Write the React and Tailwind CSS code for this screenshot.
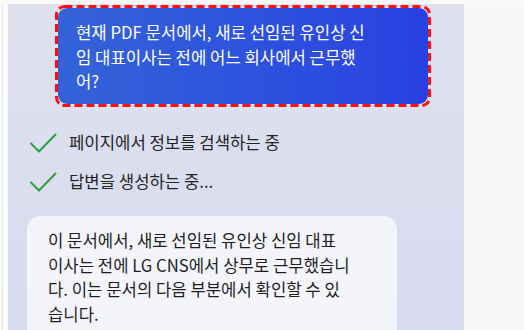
import React from "react";

const font = { fontFamily: '"Noto Sans CJK KR", "Noto Sans", sans-serif' };

function Check() {
  return (
    <svg width="28" height="24" viewBox="0 0 28 24" className="shrink-0">
      <polyline
        points="1.5,12 10,20.5 27,3"
        fill="none"
        stroke="#2f9e41"
        strokeWidth="2"
        strokeLinejoin="round"
      />
    </svg>
  );
}

export default function App() {
  return (
    <div
      className="w-[524px] h-[330px] overflow-hidden flex flex-col bg-[#f8f8f8]"
      style={font}
    >
      <div className="h-[4px] shrink-0 bg-[#f9f9f9]" />
      <div className="flex flex-1 min-h-0">
        {/* left edge */}
        <div className="w-[8px] shrink-0 bg-[#fbfbfb] flex">
          <div className="ml-[2px] w-[1px] bg-[#e6e6e6]" />
        </div>

        {/* chat panel */}
        <div className="w-[456px] shrink-0 overflow-hidden bg-gradient-to-b from-[#dfe1ef] to-[#d7dbee] flex flex-col">
          {/* user bubble with red dashed highlight */}
          <div className="relative shrink-0 ml-[47px] mt-[1px] w-[376px] h-[102px] p-[3px]">
            <div className="h-full rounded-[9px] bg-gradient-to-r from-[#3463d8] to-[#2a40e2] pl-[18px] pr-[10px] pt-[12px] text-white text-[16.7px] leading-[24.5px]">
              현재 PDF 문서에서, 새로 선임된 유인상 신<br />
              임 대표이사는 전에 어느 회사에서 근무했<br />
              어?
            </div>
            <svg
              className="absolute inset-0 pointer-events-none"
              width="376"
              height="102"
            >
              <rect
                x="1.5"
                y="1.5"
                width="373"
                height="99"
                rx="8"
                fill="none"
                stroke="#ff1010"
                strokeWidth="3"
                strokeDasharray="8 4"
              />
            </svg>
          </div>

          {/* progress rows */}
          <div className="shrink-0 mt-[23px] ml-[21px] flex flex-col gap-[14px] text-[16.7px] leading-[25px] text-[#242424]">
            <div className="flex items-center gap-[12px]">
              <Check />
              <span>페이지에서 정보를 검색하는 중</span>
            </div>
            <div className="flex items-center gap-[12px]">
              <Check />
              <span>답변을 생성하는 중...</span>
            </div>
          </div>

          {/* answer bubble */}
          <div className="shrink-0 mt-[22px] ml-[19px] w-[370px] rounded-t-[14px] bg-[#f4f5fb] pl-[21px] pr-[10px] pt-[12px] pb-[20px] text-[16.7px] leading-[24.5px] text-[#1e1e1e]">
            이 문서에서, 새로 선임된 유인상 신임 대표<br />
            이사는 전에 LG CNS에서 상무로 근무했습니<br />
            다. 이는 문서의 다음 부분에서 확인할 수 있<br />
            습니다.
          </div>
        </div>

        {/* right area */}
        <div className="flex-1 bg-[#f7f7f7]" />
      </div>
    </div>
  );
}
